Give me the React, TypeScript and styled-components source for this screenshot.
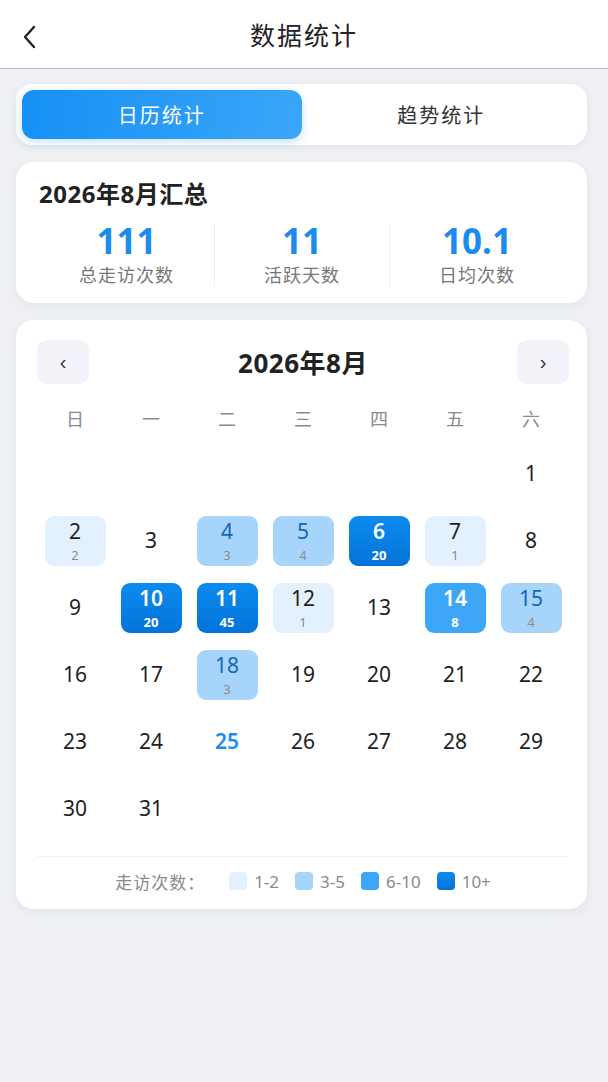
import React from 'react';
import styled, { createGlobalStyle } from 'styled-components';

const GlobalStyle = createGlobalStyle`
  html, body {
    margin: 0;
    padding: 0;
    background: #eef0f4;
    font-family: "Noto Sans", "Noto Sans CJK SC", sans-serif;
  }
  * { box-sizing: border-box; }
`;

const Page = styled.div`
  width: 608px;
  min-height: 1082px;
  background: #eef0f4;
`;

const Header = styled.div`
  height: 69px;
  background: #fff;
  border-bottom: 1px solid #b9bcc2;
  display: flex;
  align-items: center;
  justify-content: center;
  position: relative;
`;

const BackButton = styled.button`
  position: absolute;
  left: 16px;
  top: 24px;
  border: 0;
  background: none;
  padding: 0;
  width: 26px;
  height: 26px;
  display: flex;
  align-items: center;
  justify-content: center;
`;

const HeaderTitle = styled.h1`
  margin: 0;
  font-size: 25px;
  font-weight: 400;
  color: #222;
  letter-spacing: 2px;
`;

const Content = styled.div`
  padding: 15px 21px 0 16px;
  display: flex;
  flex-direction: column;
  gap: 17px;
`;

const Tabs = styled.div`
  display: flex;
  background: #fff;
  border-radius: 16px;
  padding: 6px;
  height: 61px;
  box-shadow: 0 2px 8px rgba(30, 50, 90, 0.06);
`;

const Tab = styled.div<{ $active?: boolean }>`
  flex: 1;
  display: flex;
  align-items: center;
  justify-content: center;
  border-radius: 12px;
  font-size: 20px;
  letter-spacing: 2px;
  color: ${({ $active }) => ($active ? '#fff' : '#333')};
  background: ${({ $active }) => ($active ? 'linear-gradient(100deg, #1690f5 0%, #3aa6f8 100%)' : 'transparent')};
  box-shadow: ${({ $active }) => ($active ? '0 3px 10px rgba(30, 140, 240, 0.25)' : 'none')};
`;

const Card = styled.div`
  background: #fff;
  border-radius: 18px;
  box-shadow: 0 3px 10px rgba(30, 50, 90, 0.06);
`;

const SummaryCard = styled(Card)`
  padding: 18px 23px 12px;
`;

const SummaryTitle = styled.div`
  font-size: 24px;
  font-weight: 700;
  color: #222;
  line-height: 28px;
  letter-spacing: 0.5px;
`;

const StatsRow = styled.div`
  display: grid;
  grid-template-columns: repeat(3, 1fr);
  margin-top: 10px;
`;

const Stat = styled.div<{ $divider?: boolean }>`
  display: flex;
  flex-direction: column;
  align-items: center;
  border-left: ${({ $divider }) => ($divider ? '1px solid #eceef2' : '0')};
  margin: 4px 0;
`;

const StatValue = styled.div`
  font-size: 35px;
  font-weight: 700;
  color: #1a8cef;
  line-height: 38px;
`;

const StatLabel = styled.div`
  font-size: 18px;
  color: #777;
  line-height: 24px;
  margin-top: 3px;
  letter-spacing: 1px;
`;

const CalendarCard = styled(Card)`
  padding: 20px 18px 16px 21px;
`;

const NavRow = styled.div`
  display: flex;
  align-items: center;
  justify-content: space-between;
  height: 44px;
  margin-bottom: 12px;
`;

const NavButton = styled.button`
  width: 52px;
  height: 44px;
  border: 0;
  border-radius: 10px;
  background: #f1f3f8;
  color: #333;
  font-size: 20px;
  display: flex;
  align-items: center;
  justify-content: center;
  padding: 0;
`;

const MonthTitle = styled.div`
  font-size: 26px;
  font-weight: 700;
  color: #222;
  letter-spacing: 0.5px;
`;

const Grid = styled.div`
  display: grid;
  grid-template-columns: repeat(7, 76px);
`;

const WeekDay = styled.div`
  height: 44px;
  display: flex;
  align-items: center;
  justify-content: center;
  font-size: 18px;
  color: #8a8a8a;
`;

const DayCell = styled.div`
  height: 67px;
  display: flex;
  align-items: center;
  justify-content: center;
`;

type Level = 0 | 1 | 2 | 3 | 4;

const levelBg: Record<Level, string> = {
  0: 'transparent',
  1: '#e3f0fd',
  2: '#a6d4fb',
  3: '#3ea6f6',
  4: 'linear-gradient(180deg, #0b8bee 0%, #0573d9 100%)',
};

const DayBox = styled.div<{ $level: Level }>`
  width: 61px;
  height: 50px;
  border-radius: 9px;
  background: ${({ $level }) => levelBg[$level]};
  display: flex;
  flex-direction: column;
  align-items: center;
  justify-content: center;
`;

const DayNum = styled.div<{ $level: Level; $today?: boolean }>`
  font-size: 21px;
  line-height: 29px;
  font-weight: ${({ $today, $level }) => ($today || $level >= 3 ? 600 : 400)};
  color: ${({ $level, $today }) =>
    $today ? '#1a8cef' : $level >= 3 ? '#fff' : $level === 2 ? '#1268b8' : '#1e1e1e'};
`;

const DayCount = styled.div<{ $level: Level }>`
  font-size: 13px;
  line-height: 18px;
  font-weight: ${({ $level }) => ($level >= 3 ? 700 : 400)};
  color: ${({ $level }) => ($level >= 3 ? '#fff' : '#8c8c8c')};
`;

const Divider = styled.div`
  height: 1px;
  background: #f0f1f4;
  margin: 14px 0 12px;
`;

const Legend = styled.div`
  display: flex;
  align-items: center;
  justify-content: center;
  gap: 16px;
  height: 24px;
  font-size: 17px;
  color: #8a8a8a;
`;

const LegendLabel = styled.span`
  letter-spacing: 1px;
  margin-right: 8px;
`;

const LegendItem = styled.div`
  display: flex;
  align-items: center;
  gap: 7px;
`;

const Swatch = styled.span<{ $level: Level }>`
  width: 18px;
  height: 18px;
  border-radius: 4px;
  background: ${({ $level }) => levelBg[$level]};
`;

const counts: Record<number, number> = {
  2: 2, 4: 3, 5: 4, 6: 20, 7: 1, 10: 20, 11: 45, 12: 1, 14: 8, 15: 4, 18: 3,
};

const levelOf = (n?: number): Level => {
  if (!n) return 0;
  if (n <= 2) return 1;
  if (n <= 5) return 2;
  if (n <= 10) return 3;
  return 4;
};

const weekDays = ['日', '一', '二', '三', '四', '五', '六'];

const App = () => {
	const cells: Array<number | null> = [];
	for (let i = 0; i < 6; i++) cells.push(null);
	for (let d = 1; d <= 31; d++) cells.push(d);

	return (
		<Page>
			<GlobalStyle />
			<Header>
				<BackButton>
					<svg width="14" height="24" viewBox="0 0 14 24" fill="none">
						<path d="M12 2L3 12l9 10" stroke="#222" strokeWidth="2.4" strokeLinecap="round" strokeLinejoin="round" />
					</svg>
				</BackButton>
				<HeaderTitle>数据统计</HeaderTitle>
			</Header>
			<Content>
				<Tabs>
					<Tab $active>日历统计</Tab>
					<Tab>趋势统计</Tab>
				</Tabs>
				<SummaryCard>
					<SummaryTitle>2026年8月汇总</SummaryTitle>
					<StatsRow>
						<Stat>
							<StatValue>111</StatValue>
							<StatLabel>总走访次数</StatLabel>
						</Stat>
						<Stat $divider>
							<StatValue>11</StatValue>
							<StatLabel>活跃天数</StatLabel>
						</Stat>
						<Stat $divider>
							<StatValue>10.1</StatValue>
							<StatLabel>日均次数</StatLabel>
						</Stat>
					</StatsRow>
				</SummaryCard>
				<CalendarCard>
					<NavRow>
						<NavButton>‹</NavButton>
						<MonthTitle>2026年8月</MonthTitle>
						<NavButton>›</NavButton>
					</NavRow>
					<Grid>
						{weekDays.map((w) => <WeekDay key={w}>{w}</WeekDay>)}
						{cells.map((d, i) => {
							if (d === null) return <DayCell key={'e' + i} />;
							const c = counts[d];
							const lv = levelOf(c);
							return (
								<DayCell key={d}>
									<DayBox $level={lv}>
										<DayNum $level={lv} $today={d === 25}>{d}</DayNum>
										{c ? <DayCount $level={lv}>{c}</DayCount> : null}
									</DayBox>
								</DayCell>
							);
						})}
					</Grid>
					<Divider />
					<Legend>
						<LegendLabel>走访次数：</LegendLabel>
						<LegendItem><Swatch $level={1} />1-2</LegendItem>
						<LegendItem><Swatch $level={2} />3-5</LegendItem>
						<LegendItem><Swatch $level={3} />6-10</LegendItem>
						<LegendItem><Swatch $level={4} />10+</LegendItem>
					</Legend>
				</CalendarCard>
			</Content>
		</Page>
	);
};

export default App;
